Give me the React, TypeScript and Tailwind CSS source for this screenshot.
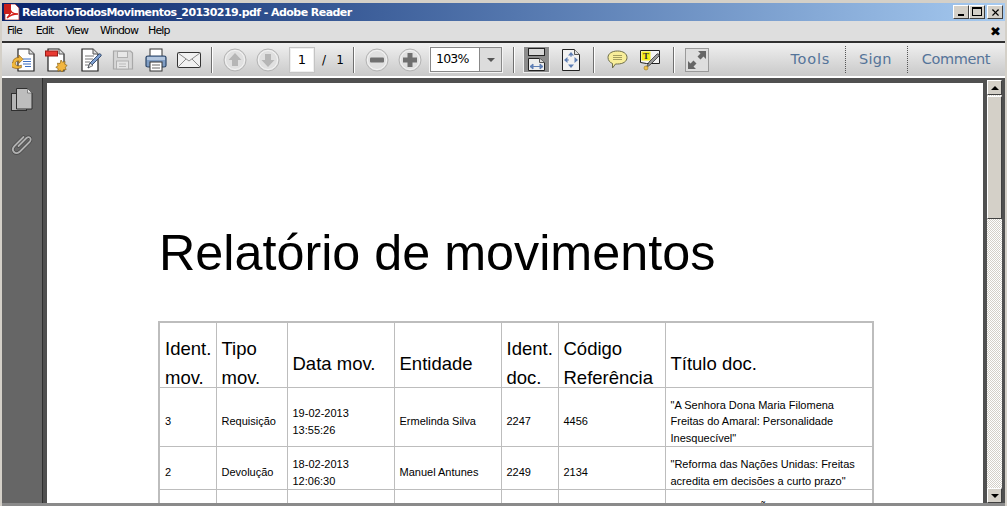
import React from 'react';
import { X } from 'lucide-react';

const Sep = ({ ml, mr }: { ml: string; mr: string }) => (
  <div className={`w-[2px] h-[26px] bg-[#6f6f6f] border-r border-white shrink-0 ${ml} ${mr}`} />
);

const PageSheet = ({ children }: { children?: React.ReactNode }) => (
  <>
    <path d="M3 1h11l5 5v17H3z" fill="#fff" stroke="#222" strokeWidth="1.2" />
    <path d="M14 1v5h5" fill="#ddd" stroke="#555" />
    {children}
  </>
);

const OpenIcon = () => (
  <svg width="24" height="24" viewBox="0 0 24 24" className="shrink-0">
    <g transform="translate(3 0)"><PageSheet /></g>
    <path d="M11 11h8M11 13.5h8M11 16h8M13 18.5h6" stroke="#3f6fc0" strokeWidth="1.2" />
    <path d="M1 16c0-4 3-6 7-6V7l5 5-5 5v-3c-3 0-4 1-4 3 0 2 2 3 4 3l3-1v3l-4 1c-6 0-10-3-10-7z" fill="#f0b83c" stroke="#8a5a10" strokeWidth="0.8" transform="translate(0 1) scale(0.85)" />
  </svg>
);

const CreateIcon = () => (
  <svg width="24" height="24" viewBox="0 0 24 24" className="shrink-0">
    <PageSheet />
    <rect x="0.5" y="3" width="12" height="5" fill="#e83a32" stroke="#9c1a14" />
    <path d="M16 12l1.5 2.2 2.6-.6-.3 2.6 2.4 1.3-2 1.7.9 2.5-2.6 0-1.2 2.3-2-1.7-2.4 1 .2-2.7-2.3-1.3 2.2-1.5-.6-2.6 2.6.4z" fill="#f2b63f" stroke="#8a6212" strokeWidth="0.7" />
  </svg>
);

const EditIcon = () => (
  <svg width="24" height="24" viewBox="0 0 24 24" className="shrink-0">
    <PageSheet />
    <path d="M6 8h9M6 11h8M6 14h5M6 17h4" stroke="#777" />
    <path d="M9 20l2-5 9-9c1-1 3 1 2 2l-9 9z" fill="#7d9ed0" stroke="#2f4565" strokeWidth="0.9" />
    <path d="M9 20l2-5 3 2.500z" fill="#eee" stroke="#333" strokeWidth="0.6" />
  </svg>
);

const SaveIcon = () => (
  <svg width="22" height="22" viewBox="0 0 22 22" className="shrink-0">
    <path d="M1.500 2h17l2 2v16h-19z" fill="#d6d6d6" stroke="#a8a8a8" strokeWidth="1.200" />
    <rect x="5.500" y="2.500" width="10" height="6" fill="#e8e8e8" stroke="#b0b0b0" />
    <rect x="4.500" y="12" width="12" height="8" fill="#e4e4e4" stroke="#b0b0b0" />
    <path d="M7 15h7M7 17.500h7" stroke="#bbb" />
  </svg>
);

const PrintIcon = () => (
  <svg width="24" height="24" viewBox="0 0 24 24" className="shrink-0">
    <rect x="6" y="1" width="12" height="8" fill="#fff" stroke="#333" />
    <path d="M2 9.500c0-1 1-1.500 2-1.500h16c1 0 2 .5 2 1.500v8c0 1-1 1.500-2 1.500H4c-1 0-2-.5-2-1.500z" fill="#7f9dc4" stroke="#2e4667" strokeWidth="1.200" />
    <rect x="3" y="9" width="18" height="3" fill="#b3c6de" />
    <rect x="6" y="14" width="12" height="9" fill="#fff" stroke="#333" />
    <path d="M8 17h8M8 20h8" stroke="#666" />
  </svg>
);

const MailIcon = () => (
  <svg width="24" height="18" viewBox="0 0 24 18" className="shrink-0">
    <rect x="0.500" y="1.500" width="23" height="15" rx="1" fill="#f1f1f1" stroke="#333" />
    <path d="M1 2l11 8 11-8M1 16l8-8M23 16l-8-8" fill="none" stroke="#8a8a8a" />
  </svg>
);

const RoundIcon = ({ kind }: { kind: 'up' | 'down' | 'minus' | 'plus' }) => (
  <svg width="24" height="24" viewBox="0 0 24 24" className="shrink-0">
    <circle cx="12" cy="12" r="11" fill="#e0e0e0" stroke="#b4b4b4" strokeWidth="1" />
    <circle cx="12" cy="12" r="9.500" fill="none" stroke="#f4f4f4" />
    {kind === 'up' && <path d="M12 5l6.500 7h-3.500v6h-6v-6h-3.500z" fill="#b6b6b6" />}
    {kind === 'down' && <path d="M12 19l-6.500-7h3.500v-6h6v6h3.500z" fill="#b6b6b6" />}
    {kind === 'minus' && <rect x="5" y="9.500" width="14" height="5" rx="1" fill="#707070" />}
    {kind === 'plus' && <path d="M9.500 5h5v4.500h4.500v5h-4.500v4.500h-5v-4.500h-4.500v-5h4.500z" fill="#707070" />}
  </svg>
);

const FitWidthIcon = () => (
  <div className="w-[27px] h-[27px] bg-[#8c8c8c] border border-[#efefef] flex items-center justify-center shrink-0">
    <svg width="17" height="23" viewBox="0 0 17 23">
      <rect x="0.500" y="0.500" width="16" height="7" fill="#d8d8d8" stroke="#222" />
      <path d="M0.500 10.500h11l5 4v8h-16z" fill="#eee" stroke="#222" />
      <path d="M11.500 10.500v4h5" fill="#ddd" stroke="#555" />
      <path d="M2 18.500h13M2 18.500l3-2.500v5zM15 18.500l-3-2.500v5z" fill="#5f7fb5" stroke="#5f7fb5" />
    </svg>
  </div>
);

const FitPageIcon = () => (
  <svg width="18" height="22" viewBox="0 0 18 22" className="shrink-0">
    <path d="M0.500 0.500h12l5 5v16h-17z" fill="#f2f2f2" stroke="#222" />
    <path d="M12.500 0.500v5h5" fill="#ddd" stroke="#555" />
    <path d="M9 4v14M3 11h12" stroke="#6f88b8" strokeDasharray="3 8" strokeDashoffset="-1" />
    <path d="M9 3l-3 3.500h6zM9 19l-3-3.500h6zM2 11l3.500-3v6zM16 11l-3.500-3v6z" fill="#5f7fb5" />
  </svg>
);

const CommentIcon = () => (
  <svg width="21" height="19" viewBox="0 0 21 19" className="shrink-0">
    <path d="M10.500 1c5.500 0 9.500 2.500 9.500 6.500s-4 6.500-9.500 6.500h-2l-3 4v-4.500C3 12.500 1 10.500 1 7.500 1 3.500 5 1 10.500 1z" fill="#f8ee9a" stroke="#6e6e4a" />
    <path d="M6 5.500h9M6 7.500h9M6 9.500h9" stroke="#8f8a50" strokeWidth="0.800" />
  </svg>
);

const NoteIcon = () => (
  <svg width="21" height="23" viewBox="0 0 21 23" className="shrink-0">
    <path d="M0.500 2.500h19v13h-13l-6-1z" fill="#f4f4f4" stroke="#222" />
    <rect x="1.500" y="3.500" width="9" height="9" fill="#f6ee1a" />
    <text x="6" y="11" fontSize="9" fontWeight="bold" textAnchor="middle" fontFamily="Liberation Serif, serif" fill="#333">T</text>
    <path d="M6 20l3-6 8-8c1-1 3 1 2 2l-8 8z" fill="#9a9a9a" stroke="#333" strokeWidth="0.800" />
    <circle cx="6" cy="20" r="2" fill="#efc04c" stroke="#9a7a20" strokeWidth="0.600" />
  </svg>
);

const ExpandIcon = () => (
  <div className="w-[24px] h-[24px] border border-[#9a9a9a] bg-[#dedede] flex items-center justify-center shrink-0">
    <svg width="20" height="20" viewBox="0 0 20 20">
      <path d="M11 1h8v8l-2.500-2.500-3 3-3-3 3-3z" fill="#666" />
      <path d="M9 19H1v-8l2.500 2.500 3-3 3 3-3 3z" fill="#666" />
    </svg>
  </div>
);

const PagesIcon = () => (
  <svg width="22" height="24" viewBox="0 0 22 24">
    <rect x="0.500" y="5.500" width="15" height="17" fill="#b4b4b4" stroke="#2f2f2f" />
    <path d="M5.500 0.500h11l4.500 4.500v16h-15.500z" fill="#bdbdbd" stroke="#2f2f2f" />
    <path d="M16.500 0.500v4.500h4.500z" fill="#e8e8e8" stroke="#555" strokeWidth="0.600" />
  </svg>
);

const clipPath = 'M7.500 15l8-8c1.500-1.500 3.500-1 4 .5s0 2.500-1 3.500l-9.500 9.500c-2 2-4.500 2-6 .5s-1.500-4 .5-6l9-9';

const ClipIcon = () => (
  <svg width="22" height="24" viewBox="0 0 22 24" fill="none">
    <path d={clipPath} stroke="#454545" strokeWidth="3.200" strokeLinecap="round" />
    <path d={clipPath} stroke="#b0b0b0" strokeWidth="1.800" strokeLinecap="round" />
  </svg>
);

const ScrollBtn = ({ up }: { up: boolean }) => (
  <div className="w-[15px] h-[15px] bg-[#d4d0c8] border-t border-l border-t-white border-l-white border-r border-b border-r-[#404040] border-b-[#404040] flex items-center justify-center shrink-0">
    <div className={`w-0 h-0 border-l-[4px] border-r-[4px] border-l-transparent border-r-transparent ${up ? 'border-b-[4px] border-b-black' : 'border-t-[4px] border-t-black'}`} />
  </div>
);

const headers = [
  ['Ident.', 'mov.'],
  ['Tipo', 'mov.'],
  ['Data mov.'],
  ['Entidade'],
  ['Ident.', 'doc.'],
  ['Código', 'Referência'],
  ['Título doc.'],
];

const rows = [
  {
    h: 'h-[59px]',
    cells: ['3', 'Requisição', ['19-02-2013', '13:55:26'], 'Ermelinda Silva', '2247', '4456', ['"A Senhora Dona Maria Filomena', 'Freitas do Amaral: Personalidade', 'Inesquecível"']],
  },
  {
    h: 'h-[43px]',
    cells: ['2', 'Devolução', ['18-02-2013', '12:06:30'], 'Manuel Antunes', '2249', '2134', ['"Reforma das Nações Unidas: Freitas', 'acredita em decisões a curto prazo"']],
  },
];

const colClasses = ['w-[57px]', 'w-[71px]', 'w-[107px]', 'w-[107px]', 'w-[57px]', 'w-[107px]', 'w-[208px]'];

export default function App() {
  return (
    <div className="w-[1007px] h-[506px] overflow-hidden bg-[#d4d0c8] flex flex-col pt-[3px] px-[2px] font-['Liberation_Sans',sans-serif]">
      {/* title bar */}
      <div className="h-[18px] shrink-0 flex items-center pl-[2px] pr-[2px] bg-gradient-to-r from-[#0a246a] to-[#a6caf0]">
        <svg width="16" height="16" viewBox="0 0 16 16" className="shrink-0">
          <path d="M1 0h10l4 4v12H1z" fill="#fff" stroke="#a33" strokeWidth="0.800" />
          <rect x="0" y="0" width="7" height="10" fill="#c8201c" />
          <path d="M3 14c3-3 4-7 3-10 0 4 3 6 8 6-4 0-8 1-11 4z" fill="none" stroke="#d41f1a" strokeWidth="1.300" />
        </svg>
        <span className="ml-[2px] text-white font-bold text-[11px] leading-none font-['DejaVu_Sans',sans-serif] tracking-[-0.56px] whitespace-nowrap">RelatorioTodosMovimentos_20130219.pdf - Adobe Reader</span>
        <div className="ml-auto flex gap-0">
          {['min', 'max'].map((k) => (
            <div key={k} className="w-[16px] h-[14px] bg-[#d4d0c8] border-t border-l border-t-white border-l-white border-r border-b border-r-[#404040] border-b-[#404040] relative">
              {k === 'min' ? <div className="absolute left-[4px] bottom-[2px] w-[6px] h-[2px] bg-black" /> : <div className="absolute left-[2px] top-[1px] w-[10px] h-[9px] border border-black border-t-2" />}
            </div>
          ))}
          <div className="ml-[2px] w-[16px] h-[14px] bg-[#d4d0c8] border-t border-l border-t-white border-l-white border-r border-b border-r-[#404040] border-b-[#404040] flex items-center justify-center">
            <X size={11} strokeWidth={2.500} color="#000" />
          </div>
        </div>
      </div>

      {/* menu bar */}
      <div className="h-[20px] shrink-0 bg-[#dedede] flex items-center pt-[1px] pl-[5px] pr-[5px] text-[11px] text-black font-['DejaVu_Sans',sans-serif] tracking-[-0.9px] gap-[12px]">
        <span className="mr-[2px]">File</span>
        <span>Edit</span>
        <span>View</span>
        <span>Window</span>
        <span className="-ml-[2px]">Help</span>
        <span className="ml-auto font-bold text-[13px] leading-none">✖</span>
      </div>

      {/* toolbar */}
      <div className="h-[37px] shrink-0 border-t-2 border-t-[#303030] border-b-2 border-b-white bg-gradient-to-b from-[#f0f0f0] to-[#c9c9c9] flex items-center pl-[10px]">
        <OpenIcon />
        <div className="ml-[9px]"><CreateIcon /></div>
        <div className="ml-[10px]"><EditIcon /></div>
        <div className="ml-[9px]"><SaveIcon /></div>
        <div className="ml-[10px]"><PrintIcon /></div>
        <div className="ml-[9px]"><MailIcon /></div>
        <Sep ml="ml-[10px]" mr="mr-[10px]" />
        <RoundIcon kind="up" />
        <div className="ml-[9px]"><RoundIcon kind="down" /></div>
        <div className="ml-[9px] w-[26px] h-[26px] bg-white border-2 border-[#efefef] outline outline-1 outline-[#c4c4c4] -outline-offset-1 flex items-center justify-center text-[13px] text-black font-['DejaVu_Sans',sans-serif] shrink-0">1</div>
        <div className="ml-[7px] w-[22px] text-[12px] text-black font-['DejaVu_Sans',sans-serif] shrink-0 flex justify-between"><span>/</span><span>1</span></div>
        <Sep ml="ml-[9px]" mr="mr-[10px]" />
        <RoundIcon kind="minus" />
        <div className="ml-[9px]"><RoundIcon kind="plus" /></div>
        <div className="ml-[7px] w-[74px] h-[27px] border-2 border-[#f4f4f4] outline outline-1 outline-[#888] -outline-offset-2 flex shrink-0">
          <div className="flex-1 bg-white flex items-center pl-[5px] text-[12.500px] text-black font-['DejaVu_Sans',sans-serif] tracking-[-0.8px]">103%</div>
          <div className="w-[22px] bg-[#dcdcdc] border-l border-[#888] flex items-center justify-center">
            <div className="w-0 h-0 border-l-[4px] border-r-[4px] border-t-[4px] border-l-transparent border-r-transparent border-t-[#555]" />
          </div>
        </div>
        <Sep ml="ml-[10px]" mr="mr-[8px]" />
        <FitWidthIcon />
        <div className="ml-[12px]"><FitPageIcon /></div>
        <Sep ml="ml-[13px]" mr="mr-[12px]" />
        <CommentIcon />
        <div className="ml-[12px]"><NoteIcon /></div>
        <Sep ml="ml-[12px]" mr="mr-[10px]" />
        <ExpandIcon />
        <div className="ml-auto flex items-center text-[14.500px] text-[#557499] font-['DejaVu_Sans',sans-serif] pr-[15px] h-full">
          <span className="tracking-[0.8px]">Tools</span>
          <div className="ml-[15px] mr-[13px] h-[27px] border-l border-dotted border-[#555]" />
          <span className="tracking-[0.25px]">Sign</span>
          <div className="ml-[15px] mr-[14px] h-[27px] border-l border-dotted border-[#555]" />
          <span className="tracking-[-0.4px]">Comment</span>
        </div>
      </div>

      {/* main area */}
      <div className="flex-1 min-h-0 flex border-b-[3px] border-b-[#8a8a8a] bg-[#505050]">
        <aside className="w-[41px] shrink-0 bg-[#666666] border-r border-[#303030] flex flex-col items-center pt-[10px] gap-[19px]">
          <PagesIcon />
          <ClipIcon />
        </aside>
        <div className="w-[4px] shrink-0" />
        <main className="mt-[5px] w-[936px] shrink-0 bg-white overflow-hidden pl-[111px] pt-[139px]">
          <h1 className="text-[50.300px] leading-[62px] font-normal text-black whitespace-nowrap ml-[1px]">Relatório de movimentos</h1>
          <table className="mt-[37px] table-fixed border-collapse border-2 border-[#bdbdbd] w-[715px] text-black">
            <thead>
              <tr className="h-[65px]">
                {headers.map((lines, i) => (
                  <th key={i} className={`${colClasses[i]} border border-[#bdbdbd] px-[5px] pt-[11px] text-left font-normal align-middle text-[18.500px] leading-[29px] whitespace-nowrap`}>
                    <div className="-mb-[6px]">
                      {lines.map((l) => (
                        <div key={l}>{l}</div>
                      ))}
                    </div>
                  </th>
                ))}
              </tr>
            </thead>
            <tbody>
              {rows.map((r, ri) => (
                <tr key={ri} className={r.h}>
                  {r.cells.map((c, ci) => (
                    <td key={ci} className="border border-[#bdbdbd] px-[5px] pt-[7px] text-[11px] leading-[16.500px] align-middle whitespace-nowrap">
                      <div className="-mb-[3px]">
                        {Array.isArray(c) ? c.map((l) => <div key={l}>{l}</div>) : c}
                      </div>
                    </td>
                  ))}
                </tr>
              ))}
              <tr className="h-[43px]">
                {colClasses.map((c, i) => (
                  <td key={c + i} className="border border-[#bdbdbd] px-[5px] pt-[9px] text-[11px] leading-[16.500px] align-top whitespace-nowrap">
                    {i === 6 && <div className="pl-[89px]">Ã</div>}
                  </td>
                ))}
              </tr>
            </tbody>
          </table>
        </main>
        <div className="w-[4px] shrink-0" />
        {/* scrollbar */}
        <div className="mt-[2px] w-[15px] shrink-0 flex flex-col bg-[repeating-conic-gradient(#d4d0c8_0%_25%,#ffffff_0%_50%)] bg-[length:2px_2px]">
          <ScrollBtn up />
          <div className="mt-[1px] h-[123px] shrink-0 bg-[#d4d0c8] border-t border-l border-t-white border-l-white border-r border-b border-r-[#404040] border-b-[#404040]" />
          <div className="flex-1" />
          <ScrollBtn up={false} />
        </div>
      </div>
    </div>
  );
}
